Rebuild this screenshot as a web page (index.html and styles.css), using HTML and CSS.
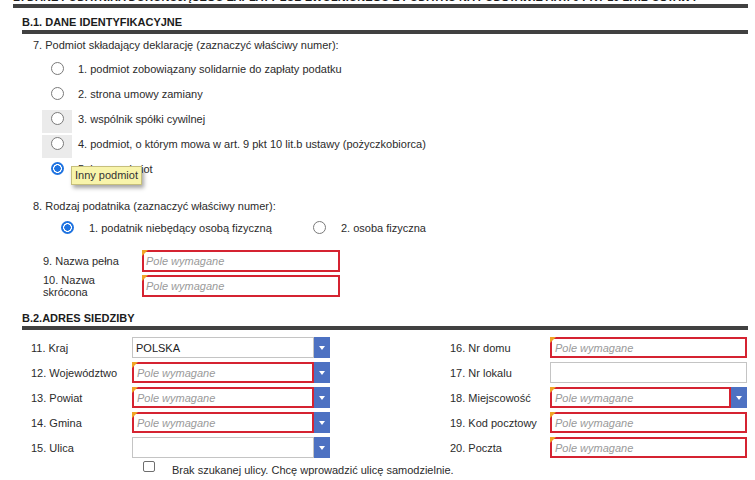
FILE: index.html
```html
<!DOCTYPE html>
<html lang="pl">
<head>
<meta charset="utf-8">
<title>B. Dane podatnika</title>
<link rel="stylesheet" href="styles.css">
</head>
<body>
<div class="page">
  <h2 class="sec-title">B. DANE PODATNIKA DOKONUJĄCEGO ZAPŁATY LUB ZWOLNIONEGO Z PODATKU NA PODSTAWIE ART. 9 PKT 10 LIT.B USTAWY</h2>
  <div class="bar"></div>

  <section class="sub">
    <h3 class="sub-title">B.1. DANE IDENTYFIKACYJNE</h3>
    <div class="bar"></div>

    <p class="q">7. Podmiot składający deklarację (zaznaczyć właściwy numer):</p>
    <div class="opts">
      <label class="opt"><span class="rcell"><span class="radio"></span></span><span class="otext">1. podmiot zobowiązany solidarnie do zapłaty podatku</span></label>
      <label class="opt"><span class="rcell"><span class="radio"></span></span><span class="otext">2. strona umowy zamiany</span></label>
      <label class="opt"><span class="rcell hl"><span class="radio"></span></span><span class="otext">3. wspólnik spółki cywilnej</span></label>
      <label class="opt"><span class="rcell hl"><span class="radio"></span></span><span class="otext">4. podmiot, o którym mowa w art. 9 pkt 10 lit.b ustawy (pożyczkobiorca)</span></label>
      <label class="opt tip-host"><span class="rcell"><span class="radio on"></span></span><span class="otext">5. inny podmiot</span><span class="tooltip">Inny podmiot</span></label>
    </div>

    <p class="q q8">8. Rodzaj podatnika (zaznaczyć właściwy numer):</p>
    <div class="opts2">
      <label class="opt2"><span class="radio on"></span><span class="o2text">1. podatnik niebędący osobą fizyczną</span></label>
      <label class="opt2"><span class="radio"></span><span class="o2text">2. osoba fizyczna</span></label>
    </div>

    <div class="names">
      <div class="nlabel">9. Nazwa pełna</div>
      <div class="field err"><span class="ph">Pole wymagane</span></div>
      <div class="nlabel">10. Nazwa skrócona</div>
      <div class="field err"><span class="ph">Pole wymagane</span></div>
    </div>
  </section>

  <section class="sub sub2">
    <h3 class="sub-title">B.2.ADRES SIEDZIBY</h3>
    <div class="bar"></div>

    <div class="addr">
      <div class="acol">
        <div class="alabel">11. Kraj</div>
        <div class="sel"><div class="sbox"><span class="val">POLSKA</span></div><div class="sbtn"><span class="tri"></span></div></div>
        <div class="alabel">12. Województwo</div>
        <div class="sel"><div class="sbox err"><span class="ph">Pole wymagane</span></div><div class="sbtn"><span class="tri"></span></div></div>
        <div class="alabel">13. Powiat</div>
        <div class="sel"><div class="sbox err"><span class="ph">Pole wymagane</span></div><div class="sbtn"><span class="tri"></span></div></div>
        <div class="alabel">14. Gmina</div>
        <div class="sel"><div class="sbox err"><span class="ph">Pole wymagane</span></div><div class="sbtn"><span class="tri"></span></div></div>
        <div class="alabel">15. Ulica</div>
        <div class="sel"><div class="sbox"></div><div class="sbtn"><span class="tri"></span></div></div>
      </div>
      <div class="acol acol-r">
        <div class="alabel">16. Nr domu</div>
        <div class="sel"><div class="sbox err"><span class="ph">Pole wymagane</span></div></div>
        <div class="alabel">17. Nr lokalu</div>
        <div class="sel"><div class="sbox"></div></div>
        <div class="alabel">18. Miejscowość</div>
        <div class="sel"><div class="sbox err"><span class="ph">Pole wymagane</span></div><div class="sbtn"><span class="tri"></span></div></div>
        <div class="alabel">19. Kod pocztowy</div>
        <div class="sel"><div class="sbox err"><span class="ph">Pole wymagane</span></div></div>
        <div class="alabel">20. Poczta</div>
        <div class="sel"><div class="sbox err"><span class="ph">Pole wymagane</span></div></div>
      </div>
    </div>

    <label class="chk"><span class="cbox"></span><span class="ctext">Brak szukanej ulicy. Chcę wprowadzić ulicę samodzielnie.</span></label>
  </section>
</div>
</body>
</html>
```

FILE: styles.css
```css
html, body {
  margin: 0;
  padding: 0;
  background: #ffffff;
}

body {
  font-family: "Liberation Sans", Arial, sans-serif;
  font-size: 11px;
  color: #262626;
  overflow: hidden;
}

.page {
  margin-top: -9px;
  padding: 0 7px 0 13px;
}

.sec-title,
.sub-title {
  margin: 0;
  font-size: 11px;
  line-height: 13px;
  font-weight: bold;
  color: #1c1c1c;
  white-space: nowrap;
  overflow: hidden;
}

.bar {
  height: 4px;
  background: #414141;
}

.sub {
  padding-left: 9px;
}

.sub-title {
  margin-top: 8px;
  margin-bottom: 1px;
}

.sub2 .sub-title {
  margin-top: 15px;
}

.q {
  margin: 5px 0 0 11px;
  line-height: 13px;
  color: #2b2b2b;
}

.q8 {
  margin-top: 15px;
}

/* question 7 options */
.opts {
  margin: 8px 0 0 20px;
}

.opt {
  display: flex;
  align-items: flex-start;
  height: 25px;
}

.rcell {
  width: 30px;
  height: 23px;
  box-sizing: border-box;
  padding-top: 2px;
  display: flex;
  justify-content: center;
  align-items: flex-start;
}

.rcell.hl {
  background: #ebebeb;
}

.otext {
  margin-left: 6px;
  padding-top: 3px;
  line-height: 13px;
  color: #2b2b2b;
}

.radio {
  display: block;
  width: 13px;
  height: 13px;
  box-sizing: border-box;
  border-radius: 50%;
  border: 1px solid #7a7a7a;
  background: #ffffff;
  flex: none;
}

.radio.on {
  border: none;
  background: radial-gradient(circle, #1f73e0 0 3px, #ffffff 3.4px 4.2px, #1f73e0 4.6px);
}

.tip-host {
  position: relative;
}

.tooltip {
  position: absolute;
  left: 29px;
  top: 6px;
  padding: 2px 3px 2px 3px;
  line-height: 13px;
  background: #f8f4ab;
  border: 1px solid #c6bf7c;
  color: #333333;
  white-space: nowrap;
  box-shadow: 2px 3px 4px rgba(0, 0, 0, 0.35);
}

/* question 8 options */
.opts2 {
  margin: 6px 0 0 39px;
  display: grid;
  grid-template-columns: 252px auto;
  height: 22px;
}

.opt2 {
  display: flex;
  align-items: flex-start;
}

.opt2 .radio {
  margin-top: 2px;
}

.o2text {
  margin-left: 15px;
  padding-top: 3px;
  line-height: 13px;
  color: #2b2b2b;
}

/* names */
.names {
  margin: 9px 0 0 21px;
  display: grid;
  grid-template-columns: 99px 198px;
  grid-auto-rows: 22px;
  row-gap: 3px;
}

.nlabel {
  align-self: center;
  padding-right: 10px;
  line-height: 12px;
  color: #2b2b2b;
}

.field {
  position: relative;
  box-sizing: border-box;
  border: 1px solid #c4c4c4;
  display: flex;
  align-items: center;
  padding-left: 3px;
  background: #ffffff;
}

.err {
  border: 2px solid #d52331 !important;
  padding-left: 2px;
}

.err::before {
  content: "";
  position: absolute;
  left: -2px;
  top: -2px;
  border-top: 6px solid #f0a526;
  border-right: 6px solid transparent;
}

.ph {
  font-style: italic;
  color: #9a9a9a;
  white-space: nowrap;
}

.val {
  color: #222222;
}

/* address */
.addr {
  margin: 7px 0 0 9px;
  display: flex;
  gap: 120px;
}

.acol {
  display: grid;
  grid-template-columns: 101px 198px;
  grid-auto-rows: 21px;
  row-gap: 4px;
}

.acol-r {
  grid-template-columns: 100px 197px;
}

.alabel {
  align-self: center;
  white-space: nowrap;
  color: #2b2b2b;
}

.sel {
  display: flex;
}

.sbox {
  flex: 1;
  position: relative;
  box-sizing: border-box;
  border: 1px solid #c4c4c4;
  display: flex;
  align-items: center;
  padding-left: 3px;
  background: #ffffff;
}

.sbtn {
  width: 16px;
  flex: none;
  background: #4d71c2;
  display: flex;
  align-items: center;
  justify-content: center;
}

.tri {
  display: block;
  width: 0;
  height: 0;
  border-left: 3px solid transparent;
  border-right: 3px solid transparent;
  border-top: 4px solid #ffffff;
}

/* checkbox */
.chk {
  display: flex;
  align-items: flex-start;
  margin: 3px 0 0 121px;
}

.cbox {
  width: 12px;
  height: 11px;
  box-sizing: border-box;
  border: 1px solid #6e6e6e;
  border-radius: 2px;
  background: #ffffff;
  flex: none;
}

.ctext {
  margin-left: 17px;
  padding-top: 3px;
  line-height: 13px;
  color: #2b2b2b;
}
```
